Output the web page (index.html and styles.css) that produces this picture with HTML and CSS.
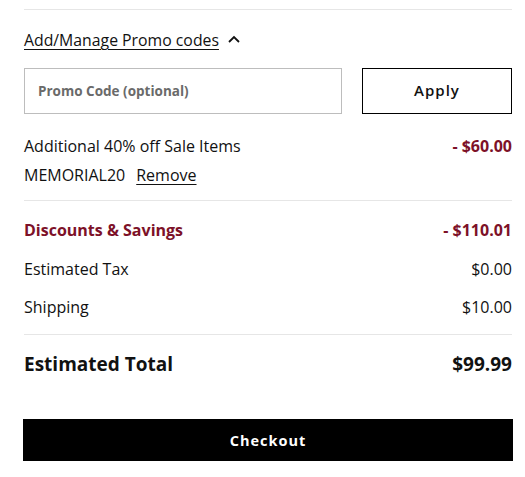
FILE: index.html
```html
<!DOCTYPE html>
<html lang="en">
<head>
  <meta charset="UTF-8" />
  <title>Order Summary</title>
  <link rel="stylesheet" href="styles.css">
</head>
<body>
  <div class="summary">
    <div class="promo">
      <a class="promo-toggle" href="#">Add/Manage Promo codes</a>
      <svg class="chevron" width="12" height="8" viewBox="0 0 12 8"><path d="M1 7 L6 2 L11 7" fill="none" stroke="#111" stroke-width="1.8"/></svg>
    </div>

    <div class="promo-form">
      <input type="text" placeholder="Promo Code (optional)" />
      <button class="btn-apply">Apply</button>
    </div>

    <div class="applied">
      <div class="row">
        <span>Additional 40% off Sale Items</span>
        <span class="red bold">- $60.00</span>
      </div>
      <div class="row code">
        <span>MEMORIAL20</span>
        <a href="#">Remove</a>
      </div>
    </div>

    <div class="totals">
      <div class="row">
        <span class="red bold">Discounts &amp; Savings</span>
        <span class="red bold">- $110.01</span>
      </div>
      <div class="row">
        <span>Estimated Tax</span>
        <span>$0.00</span>
      </div>
      <div class="row">
        <span>Shipping</span>
        <span>$10.00</span>
      </div>
    </div>

    <div class="row grand">
      <span>Estimated Total</span>
      <span>$99.99</span>
    </div>

    <button class="btn-checkout">Checkout</button>
  </div>
</body>
</html>
```

FILE: styles.css
```css
body {
  margin: 0;
  background: #fff;
  font-family: 'Open Sans', sans-serif;
  color: #111;
}

.summary {
  width: 488px;
  margin-left: 24px;
  border-top: 1px solid #e6e6e6;
  margin-top: 9px;
}

.promo {
  display: flex;
  align-items: center;
  gap: 9px;
  margin-top: 19px;
  height: 22px;
}

.promo-toggle {
  color: #111;
  font-size: 15.8px;
  text-decoration: underline;
  text-underline-offset: 3px;
}

.chevron {
  margin-top: -2px;
}

.promo-form {
  display: flex;
  justify-content: space-between;
  margin-top: 17px;
}

.promo-form input {
  width: 318px;
  height: 46px;
  box-sizing: border-box;
  border: 1px solid #bdbdbd;
  padding: 0 13px;
  font-family: 'Open Sans', sans-serif;
  font-size: 13.5px;
  font-weight: 700;
}

.promo-form input::placeholder {
  color: #6a6a6a;
}

.btn-apply {
  width: 150px;
  height: 46px;
  padding-bottom: 4px;
  background: #fff;
  border: 1.5px solid #000;
  font-family: 'Open Sans', sans-serif;
  font-size: 15px;
  font-weight: 600;
  letter-spacing: 1px;
  color: #111;
}

.row {
  display: flex;
  justify-content: space-between;
  align-items: center;
  font-size: 16px;
  line-height: 21px;
}

.applied {
  padding: 22px 0 14px;
  border-bottom: 1px solid #e6e6e6;
}

.applied .row + .row {
  margin-top: 8px;
}

.code {
  justify-content: flex-start;
  gap: 11px;
}

.code a {
  color: #111;
  text-underline-offset: 3px;
}

.totals {
  padding: 19px 0 16px;
  border-bottom: 1px solid #e6e6e6;
}

.totals .row + .row {
  margin-top: 17.5px;
}

.red {
  color: #7d1128;
}

.bold {
  font-weight: 700;
}

.grand {
  font-size: 19px;
  line-height: 26px;
  font-weight: 700;
  margin-top: 16px;
}

.btn-checkout {
  display: block;
  width: 490px;
  margin: 42px 0 0 -1px;
  height: 42px;
  background: #000;
  color: #fff;
  border: none;
  font-family: 'Open Sans', sans-serif;
  font-size: 14.5px;
  font-weight: 700;
  letter-spacing: 1px;
}
```
